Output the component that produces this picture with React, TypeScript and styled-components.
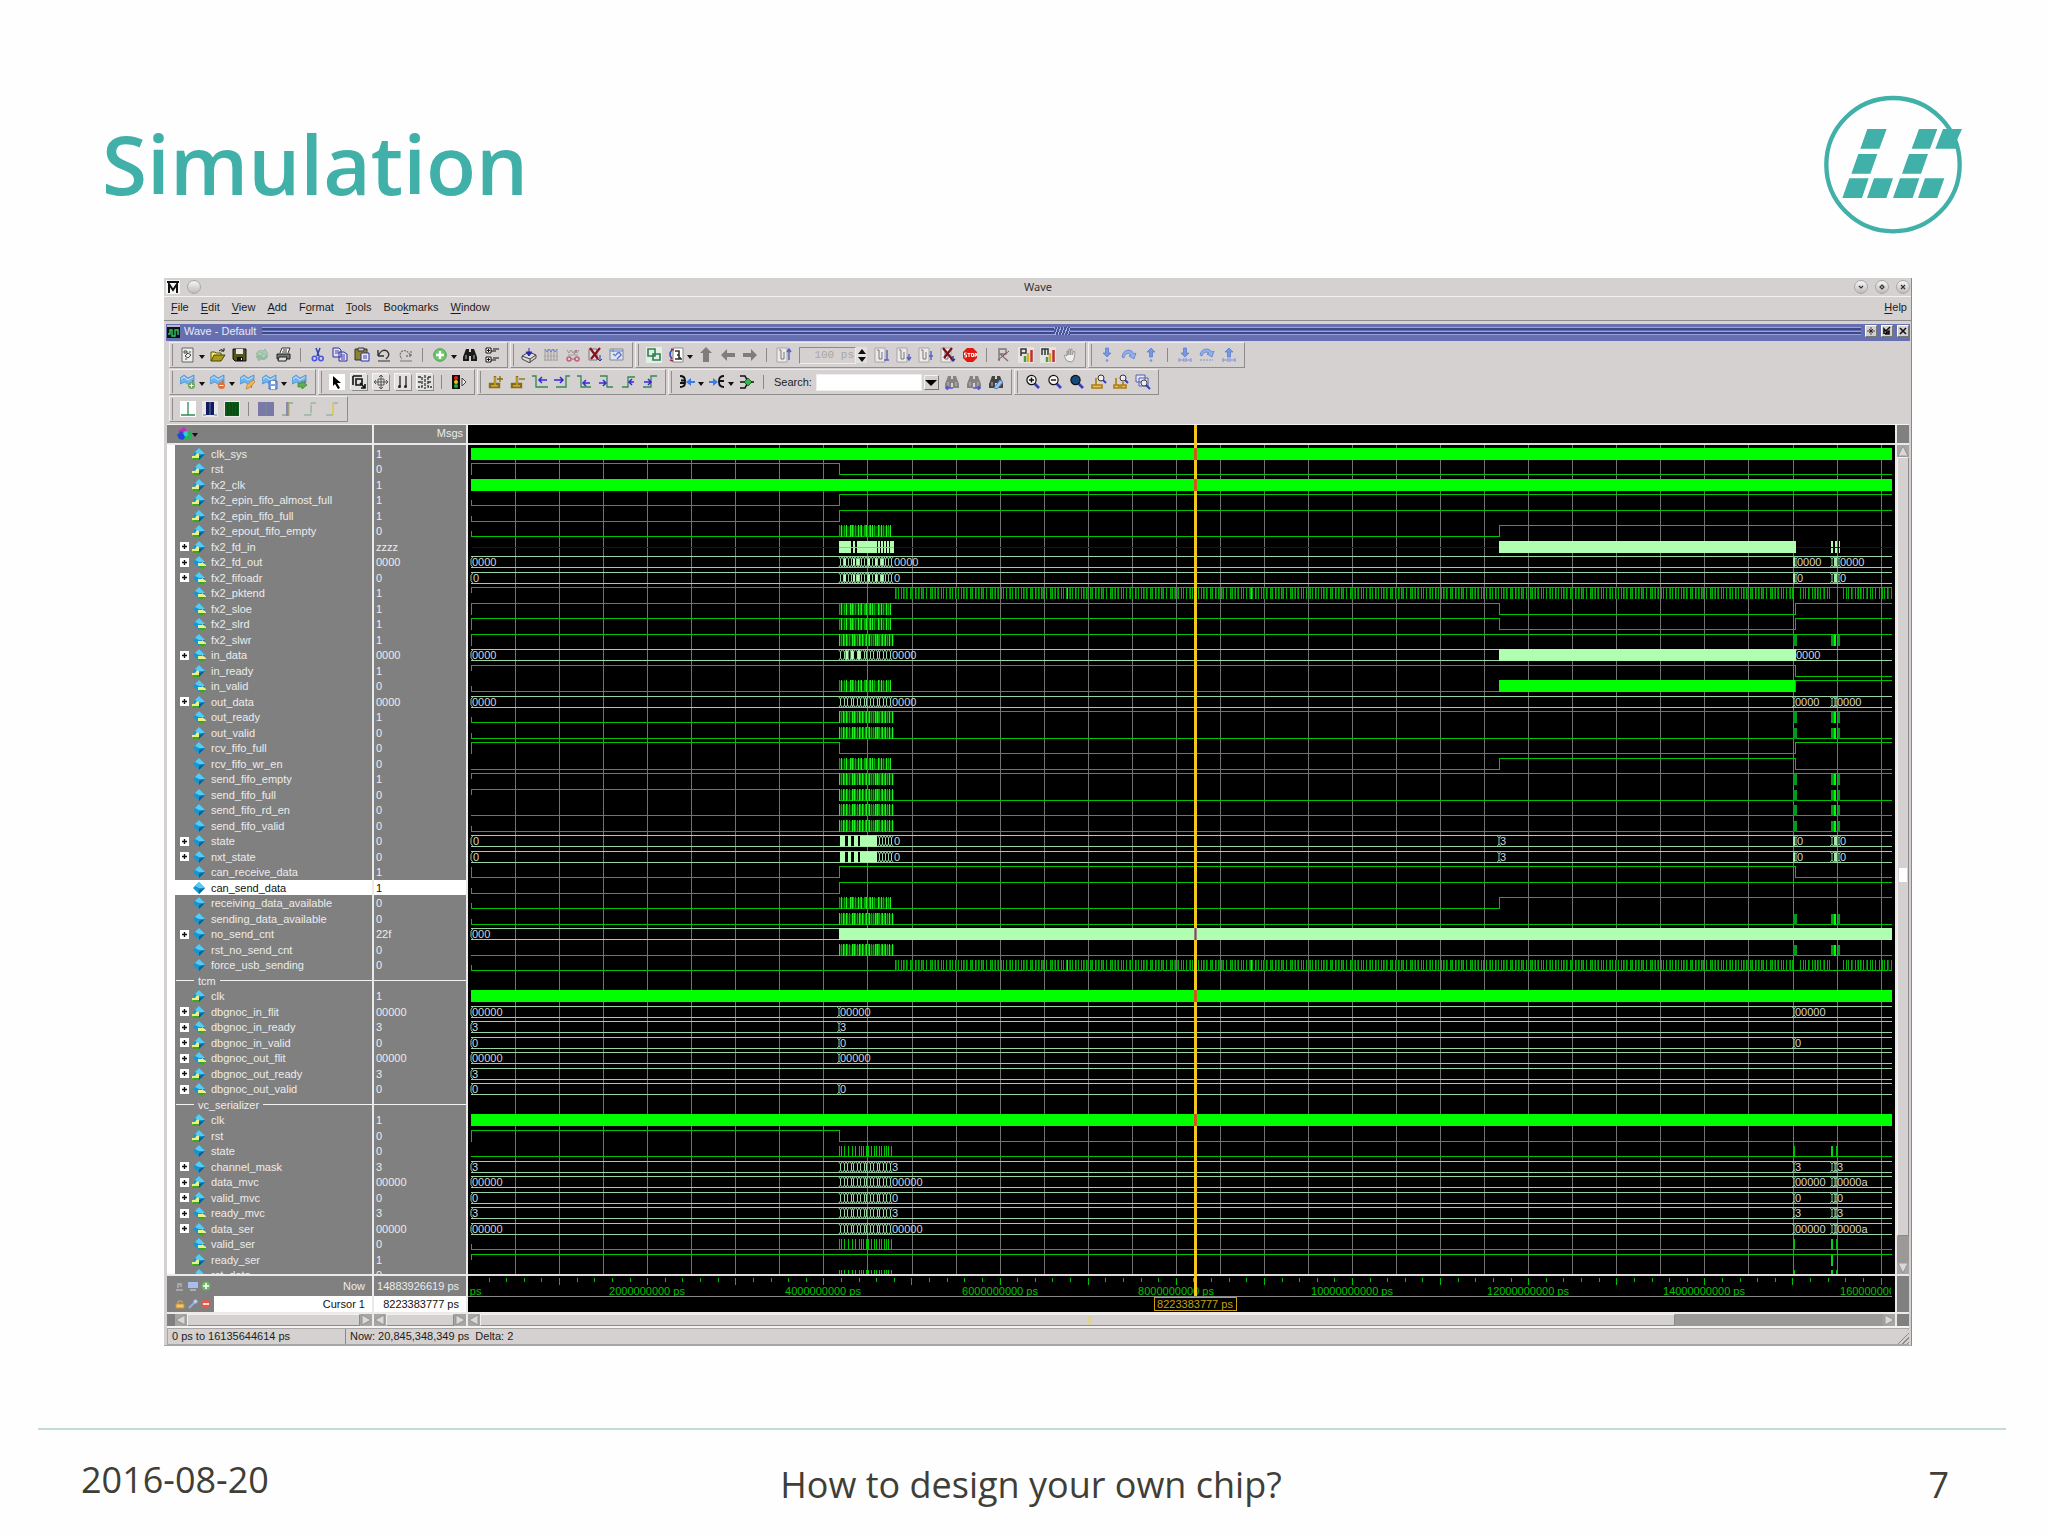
import React from "react";
import styled, { createGlobalStyle, css } from "styled-components";

const Global = createGlobalStyle`
  * { box-sizing: border-box; }
  body { margin: 0; background: #fefefe; }
  button, input { font: inherit; color: inherit; }
`;

const TEAL = "#40b0a9";
const CHROME = "#d5d1d0";

/* ---------- slide ---------- */

const Slide = styled.div`
  min-height: 100vh;
  display: flex;
  flex-direction: column;
  font-family: "Open Sans", "Noto Sans", sans-serif;
`;

const SlideHeader = styled.header`
  display: flex;
  justify-content: space-between;
  align-items: flex-start;
  padding: 95px 85px 43px 102px;
`;

const SlideTitle = styled.h1`
  margin: 0;
  padding-top: 8px;
  font-size: 82px;
  line-height: 120px;
  height: 120px;
  font-weight: 600;
  color: ${TEAL};
`;

const SlideFooter = styled.footer`
  margin: 82px 42px 0 38px;
  padding: 25px 25px 0 43px;
  border-top: 2px solid #c3dcd6;
  display: grid;
  grid-template-columns: 1fr auto 1fr;
  font-size: 36px;
  line-height: 50px;
  color: #3f3e37;
`;

const FooterMiddle = styled.span`
  padding-top: 5px;
`;

const PageNumber = styled.span`
  padding: 5px 32px 0 0;
  text-align: right;
`;

/* ---------- application window ---------- */

const Window = styled.main`
  margin: 0 136px 0 164px;
  background: ${CHROME};
  font-family: "Liberation Sans", Arial, sans-serif;
  font-size: 11px;
  color: #1c1c1c;
  border-right: 1px solid #8b8989;
  border-bottom: 1px solid #a9a7a6;
`;

const TitleBar = styled.div`
  display: grid;
  grid-template-columns: 1fr auto 1fr;
  align-items: center;
  height: 19px;
  padding: 0 1px 0 2px;
  border-bottom: 1px solid #f4f3f2;
  color: #333;
`;

const TitleSide = styled.div<{ $end?: boolean }>`
  display: flex;
  align-items: center;
  gap: 7px;
  justify-content: ${(p) => (p.$end ? "flex-end" : "flex-start")};
`;

const TitleText = styled.span`
  font-family: "Noto Sans", sans-serif;
  font-size: 11px;
  line-height: 16px;
`;

const RoundButton = styled.button`
  width: 14px;
  height: 14px;
  padding: 0;
  border: 1px solid #aaa7a6;
  border-radius: 50%;
  background: linear-gradient(#f6f6f6, #bdbbba);
  display: flex;
  align-items: center;
  justify-content: center;
`;

const MenuBar = styled.nav`
  display: flex;
  align-items: center;
  gap: 12px;
  height: 24px;
  padding: 0 4px 3px 7px;
  border-bottom: 1px solid #8c8a8a;
`;

const MenuItem = styled.button<{ $last?: boolean }>`
  border: 0;
  padding: 0;
  background: none;
  line-height: 14px;
  ${(p) => p.$last && css`margin-left: auto;`}
  u { text-underline-offset: 2px; }
`;

const PaneTitle = styled.div`
  display: flex;
  align-items: center;
  gap: 4px;
  height: 17px;
  margin: 3px 1px 0 2px;
  padding: 0 1px 3px;
  background: #6670b1;
  color: #e6e8f8;
  line-height: 14px;
`;

const PaneStripes = styled.span`
  flex: 1;
  height: 8px;
  margin: 0 0 0 2px;
  display: flex;
  justify-content: center;
  background: linear-gradient(#98a3de 0 1px, #3d4888 1px 3px, #6670b3 3px 4px, #98a3de 4px 5px, #3d4888 5px 7px, #98a3de 7px);
`;

const PaneGrip = styled.span`
  width: 16px;
  background: repeating-linear-gradient(110deg, #aab4ea 0 1px, #4a5598 1px 3px);
`;

const PaneButton = styled.button`
  width: 12px;
  height: 12px;
  padding: 0;
  border: 1px solid;
  border-color: #fff #777 #777 #fff;
  background: ${CHROME};
  display: flex;
`;

const Toolbars = styled.div`
  display: flex;
  flex-direction: column;
  gap: 1px;
  padding: 1px 0 2px 5px;
`;

const ToolRow = styled.div`
  display: flex;
  gap: 2px;
`;

const ToolGroup = styled.div`
  display: flex;
  align-items: center;
  height: 26px;
  padding: 0 4px 0 5px;
  border: 1px solid;
  border-color: #efedec #8f8d8c #8f8d8c #f4f2f1;
  &::before {
    content: "";
    width: 3px;
    height: 22px;
    border-left: 1px solid #8f8d8c;
    margin-left: -3px;
    margin-right: 1px;
  }
`;

const ToolButton = styled.button<{ $raised?: boolean }>`
  width: 22px;
  height: 20px;
  padding: 0;
  border: 0;
  background: none;
  display: flex;
  align-items: center;
  justify-content: center;
  svg {
    ${(p) => p.$raised && css`background: #e3e1e0; box-shadow: 1px 1px 0 #8d8b8b, -1px -1px 0 #f7f6f6;`}
  }
`;

const DropArrow = styled.button`
  width: 8px;
  height: 16px;
  border: 0;
  padding: 4px 0 0;
  background: none;
  display: flex;
  align-items: center;
  &::before {
    content: "";
    border: 3px solid transparent;
    border-top: 4px solid #111;
    border-bottom: 0;
  }
`;

const Separator = styled.span`
  width: 2px;
  height: 14px;
  margin: 0 5px;
  border-left: 1px solid #8b8989;
`;

const RunLength = styled.input`
  width: 57px;
  height: 17px;
  margin-left: 4px;
  padding: 0 1px;
  border: 1px solid;
  border-color: #8b8989 #eee #eee #8b8989;
  background: ${CHROME};
  color: #aaa6a5;
  text-align: right;
  font-family: "Liberation Mono", monospace;
`;

const Stepper = styled.span`
  display: flex;
  flex-direction: column;
  width: 11px;
  margin: 0 4px 0 0;
`;

const StepButton = styled.button<{ $down?: boolean }>`
  height: 8px;
  padding: 0;
  border: 0;
  background: #e3e1e0;
  display: flex;
  justify-content: center;
  align-items: center;
  &::before {
    content: "";
    border: 4px solid transparent;
    border-top-width: ${(p) => (p.$down ? 5 : 0)}px;
    border-bottom-width: ${(p) => (p.$down ? 0 : 5)}px;
    border-top-color: #111;
    border-bottom-color: #111;
  }
`;

const SearchLabel = styled.label`
  display: flex;
  align-items: center;
  gap: 4px;
  padding-left: 4px;
`;

const SearchBox = styled.input`
  width: 106px;
  height: 17px;
  border: 1px solid #eee;
  padding: 0 2px;
  background: #fff;
`;

const SearchDrop = styled.button`
  width: 15px;
  height: 15px;
  margin: 0 2px;
  padding: 4px 0 0;
  border: 1px solid;
  border-color: #f3f3f3 #777 #777 #f3f3f3;
  background: ${CHROME};
  display: flex;
  align-items: center;
  justify-content: center;
  &::before {
    content: "";
    border: 6px solid transparent;
    border-top: 6px solid #000;
    border-bottom: 3px solid transparent;
  }
`;

/* ---------- panes ---------- */

const Panes = styled.div`
  display: grid;
  grid-template-columns: 205px 92px minmax(0, 1fr) 12px;
  grid-template-rows: 18px 829px 36px 12px;
  gap: 2px;
  margin: 0 2px 0 3px;
  border-top: 1px solid #f4f3f2;
  border-bottom: 2px solid #f4f3f2;
  background: #ebe9e9;
`;

const Grey = styled.div`
  background: #808080;
  color: #ececec;
`;

const HeadCell = styled(Grey)<{ $end?: boolean }>`
  display: flex;
  align-items: center;
  justify-content: ${(p) => (p.$end ? "flex-end" : "flex-start")};
  padding: 0 3px 2px 9px;
`;

const SignalList = styled.ul<{ $names?: boolean }>`
  margin: 0;
  padding: 1px 0 0;
  list-style: none;
  display: grid;
  grid-auto-rows: 15px 16px;
  align-content: start;
  overflow: hidden;
  background: #808080;
  color: #ececec;
  ${(p) => p.$names && css`border-left: 8px solid #fff;`}
`;

const SignalRow = styled.li<{ $selected?: boolean }>`
  display: flex;
  align-items: center;
  padding-left: 5px;
  white-space: nowrap;
  ${(p) => p.$selected && css`background: #fff; color: #111;`}
`;

const ValueRow = styled(SignalRow)`
  padding-left: 2px;
`;

const Expander = styled.button<{ $shown: boolean }>`
  width: 9px;
  height: 9px;
  margin-right: 3px;
  padding: 0;
  border: 0;
  display: flex;
  background: #fff;
  visibility: ${(p) => (p.$shown ? "visible" : "hidden")};
`;

const SignalName = styled.span`
  margin-left: 5px;
`;

const GroupRow = styled.li`
  display: flex;
  align-items: center;
  gap: 4px;
  padding-left: 1px;
  &::before, &::after {
    content: "";
    height: 1px;
    background: #f2f2f2;
  }
  &::before { width: 18px; }
  &::after { flex: 1; }
`;

const RuleRow = styled.li`
  display: flex;
  align-items: center;
  &::before {
    content: "";
    flex: 1;
    height: 1px;
    background: #f2f2f2;
  }
`;

const CursorCell = styled(Grey)`
  display: grid;
  grid-template-rows: 20px 16px;
`;

const CursorRow = styled.div`
  display: flex;
  align-items: center;
  gap: 3px;
  padding-left: 8px;
`;

const CursorText = styled.span<{ $active?: boolean }>`
  flex: 1;
  align-self: stretch;
  display: flex;
  align-items: center;
  justify-content: flex-end;
  padding-right: 7px;
  white-space: nowrap;
  ${(p) => p.$active && css`background: #fff; color: #111;`}
`;

const IconButton = styled.button`
  width: 10px;
  height: 12px;
  padding: 0;
  border: 0;
  background: none;
  display: flex;
  align-items: center;
`;

const WaveSvg = styled.svg`
  grid-column: 3;
  grid-row: 1 / 4;
  width: 100%;
  height: 887px;
  background: #000;
  display: block;
  font-family: "Liberation Sans", Arial, sans-serif;
  font-size: 11px;
`;

const ScrollTrack = styled.div<{ $vertical?: boolean; $indent?: boolean }>`
  display: flex;
  flex-direction: ${(p) => (p.$vertical ? "column" : "row")};
  background: #9b9998;
  ${(p) => p.$indent && css`border-left: 8px solid #808080;`}
`;

const ScrollThumb = styled.div<{ $grow: number }>`
  flex: ${(p) => p.$grow} 1 0;
  display: flex;
  align-items: center;
  justify-content: center;
  background: ${CHROME};
  border: 1px solid;
  border-color: #f1f0f0 #8b8989 #8b8989 #f1f0f0;
`;

const ThumbMark = styled.span<{ $wide?: boolean }>`
  width: ${(p) => (p.$wide ? 8 : 4)}px;
  height: ${(p) => (p.$wide ? 14 : 9)}px;
  margin: ${(p) => (p.$wide ? "56px 0 0" : "0 0 0 24px")};
  background: ${(p) => (p.$wide ? "#fff" : "#ddd49a")};
`;

const ScrollRest = styled.div<{ $grow: number }>`
  flex: ${(p) => p.$grow} 1 0;
`;

const ScrollButton = styled.button`
  width: 12px;
  height: 12px;
  padding: 0;
  border: 0;
  background: #a8a6a5;
  display: flex;
`;

const StatusBar = styled.div`
  display: flex;
  align-items: stretch;
  height: 17px;
  margin: 0 2px 0 3px;
  line-height: 14px;
  border: 1px solid #a9a7a6;
  border-right: 0;
`;

const StatusCell = styled.span<{ $first?: boolean }>`
  width: ${(p) => (p.$first ? "178px" : "auto")};
  padding-left: 4px;
  border-right: ${(p) => (p.$first ? "1px solid #8b8989" : "0")};
  white-space: pre;
`;

const Resize = styled.span`
  margin-left: auto;
  width: 12px;
  background: repeating-linear-gradient(135deg, transparent 0 2px, #8b8989 2px 3px);
  clip-path: polygon(100% 0, 100% 100%, 0 100%);
`;

/* ---------- icons ---------- */

const Flag = ({ children }: { children?: React.ReactNode }) => (
  <>
    <path d="M0 4 4 1l4 3 6-3v8l-5 2-4-3-5 2Z" fill="#74b4ec" stroke="#3e86c8" strokeWidth=".7" />
    <path d="M1 5l3-2 4 3 5-3" stroke="#cbe6fb" fill="none" />
    <path d="M13 6l-2 8" stroke="#777" />
    {children}
  </>
);
const Glass = ({ fill = "#f4f4f4", children }: { fill?: string; children?: React.ReactNode }) => (
  <>
    <path d="M9 9l5 5" stroke="#3540b8" strokeWidth="2.6" />
    <circle cx="6.5" cy="6" r="4.6" fill={fill} stroke="#111" strokeWidth="1.2" />
    {children}
  </>
);
const Edge = ({ d, a }: { d: string; a: string }) => (
  <>
    <path d={d} stroke="#2f8a50" strokeWidth="1.3" fill="none" />
    <path d={a} stroke="#3a28d8" strokeWidth="1.5" fill="none" />
  </>
);
const RunIcon = ({ a, c = "#5a5fc0" }: { a: string; c?: string }) => (
  <>
    <path d="M1 1h10v14H1z" fill="#eceaea" stroke="#999" strokeWidth=".8" />
    <path d="M3 3h2v9M5 12h3V5" stroke="#777" fill="none" />
    <path d={a} stroke={c} strokeWidth="1.4" fill="none" />
  </>
);
const Binoculars = ({ c = "#1a1a1a", children }: { c?: string; children?: React.ReactNode }) => (
  <>
    <path d="M4 2h3v3h2V2h3l3 8v4H9V9H7v5H1v-4z" fill={c} />
    <path d="M4 8v4M12 8v4" stroke="#bbb" />
    {children}
  </>
);
const Pin = ({ d }: { d: string }) => (
  <>
    <path d="M7 2v8M2 10h9v3H2z" stroke="#8a6c10" strokeWidth="2.4" fill="#c9a820" />
    <path d="M7 3v8M3 12h7" stroke="#e0c440" />
    <path d={d} stroke="#8a6c00" strokeWidth="1.3" />
  </>
);
const StepArrow = ({ up, box }: { up?: boolean; box?: boolean }) => (
  <>
    <path d={up ? "M8 1l4 4H9.500v5h-3V5H4z" : "M8 10l4-4H9.500V1h-3v5H4z"} fill="#7698e4" stroke="#5478d0" strokeWidth=".7" />
    {box ? <path d="M2 11v4M2 13h3M6 12h4v2H6zM11 13h3M14 11v4" stroke="#7f8fe0" fill="none" /> : <circle cx="8" cy="13.500" r="1.3" fill="#7698e4" />}
  </>
);

const ICONS: Record<string, React.ReactNode> = {
  newdoc: <><path d="M2 1h11v14H2z" fill="#eee" stroke="#666" /><path d="M4 4h3v2H4zM8 6l3 2-3 3-3-2zM5 12h2M10 4v2" stroke="#444" fill="none" /></>,
  open: <><path d="M1 14V5h4l1 1h5v2" fill="#f6ec70" stroke="#5a5200" /><path d="M1 14l3-6h11l-4 6z" fill="#a89c18" stroke="#4a4400" /><path d="M9 4q2-3 5 0M14 1v3h-3" stroke="#222" fill="none" /></>,
  save: <><path d="M1 2h13v12H3l-2-2z" fill="#55551a" stroke="#111" /><path d="M4 2h7v5H4z" fill="#e6e6e0" /><path d="M5 10h6v4H5z" fill="#111" /><path d="M9 11h1v2H9z" fill="#eee" /></>,
  reload: <><path d="M2 7q2-5 8-3l1-2 3 5-6 1 1-2q-4-1-5 2z" fill="#a5cfb0" stroke="#86b094" strokeWidth=".6" /><path d="M14 9q-2 5-8 3l-1 2-3-5 6-1-1 2q4 1 5-2z" fill="#93bda2" stroke="#86b094" strokeWidth=".6" /></>,
  print: <><path d="M4 6l2-5h8l-2 5" fill="#fff" stroke="#333" /><path d="M7 3h4M6 5h5" stroke="#333" /><path d="M1 7h13v5H1z" fill="#777" stroke="#222" /><path d="M3 10h8l-1 4H2z" fill="#ddd" stroke="#222" /></>,
  cut: <><path d="M6 1l3 8M10 1L7 9" stroke="#333fae" strokeWidth="1.5" /><circle cx="4.500" cy="11.500" r="2.2" stroke="#4a58e0" strokeWidth="1.6" fill="none" /><circle cx="11" cy="11.500" r="2.2" stroke="#4a58e0" strokeWidth="1.600" fill="none" /></>,
  copy: <><path d="M1 1h6l2 2v7H1zM7 5h5l3 2v7H7z" fill="#dedef6" stroke="#31319a" /><path d="M3 4h4M3 6h4M9 8h4M9 10h4M9 12h4" stroke="#4444a8" /></>,
  paste: <><path d="M1 2h12v11H1z" fill="#8c842c" stroke="#333" /><path d="M4 1h6v3H4z" fill="#ccc" stroke="#333" /><path d="M7 6h8v8H7z" fill="#e5e5fb" stroke="#31319a" /><path d="M9 9h4M9 11h4" stroke="#4444a8" /></>,
  undo: <><path d="M2 9V3M2 9h6M2 9q4-8 9-5 4 4-1 8" stroke="#333" strokeWidth="1.400" fill="none" /><path d="M2 14h12" stroke="#333" /></>,
  redo: <><path d="M13 9V4M13 9H8M12 8Q8 1 3 5q-2 4 1 7" stroke="#777" strokeWidth="1.300" fill="none" strokeDasharray="2 1" /><path d="M2 14h12" stroke="#777" /></>,
  add: <><circle cx="8" cy="8" r="6.300" fill="#6cc46c" stroke="#4fa050" /><path d="M8 4v8M4 8h8" stroke="#fff" strokeWidth="2.400" /></>,
  find: <Binoculars />,
  tree: <><path d="M2 1h5v5H2zM2 10h5v5H2z" fill="#fff" stroke="#111" /><path d="M3 3.500h3M4.500 2v3M3 12.500h3M4.500 11v3M9 2h6M7 4h5M9 11h6M7 13h5" stroke="#111" /></>,
  compile: <><path d="M1 9l7-4 7 3-6 4zM1 9v3l8 4v-4M9 15l6-4V8" fill="#ddd" stroke="#444" /><path d="M8 1v7M5 5l3 4 3-4z" stroke="#2b2ea8" fill="#2b2ea8" /></>,
  compileall: <><path d="M2 2v12M5 2v12M8 2v12M11 2v12M14 2v12" stroke="#999" /><path d="M2 2l2 3 2-3 2 3 2-3 2 3 2-3" stroke="#7a7ad0" fill="none" /><path d="M1 9h14M1 13h14" stroke="#aaa" /></>,
  simulate: <><path d="M2 3l2 3 2-3 2 3 2-3 2 3 2-3M3 8h10" stroke="#999" fill="none" /><circle cx="4" cy="12" r="2" stroke="#c0607a" fill="none" strokeWidth="1.500" /><circle cx="12" cy="12" r="2" stroke="#c0607a" fill="none" strokeWidth="1.500" /><path d="M9 7l3-4M7 12h3" stroke="#a05070" /></>,
  breaksim: <><path d="M2 2h8v11H2z" fill="#ddd" stroke="#777" /><path d="M3 1l8 11M13 1L4 12" stroke="#8a1020" strokeWidth="2.200" /><path d="M13 8v5M11 12l2 2 2-2" stroke="#2b2ea8" fill="none" /></>,
  restart: <><path d="M1 2h13v11H1z" fill="#dfe6ee" stroke="#889" /><path d="M1 4h13M4 2v3" stroke="#6a7ac0" /><path d="M7 8q3-5 5 0l-4 4M4 7l3 2" stroke="#5a74d8" strokeWidth="1.400" fill="none" /></>,
  link: <><path d="M0 0h16v16H0z" fill="#e3eee5" /><path d="M2 2h7v7H2zM7 7h7v6H7z" fill="none" stroke="#2f8050" strokeWidth="1.600" /></>,
  envelope: <><path d="M5 1h10v14H5z" fill="#fff" stroke="#888" /><path d="M7 4h4v7h2M9 8h2M7 12h7" stroke="#333" fill="none" strokeWidth="1.600" /><path d="M4 3Q0 7 4 12" stroke="#3c46c8" strokeWidth="1.600" fill="none" /><path d="M3 2l3 1M2 13l3 1" stroke="#c02020" strokeWidth="1.500" /></>,
  up: <path d="M8 0l6 6h-3v9H5V6H2z" fill="#7f7d7c" />,
  left: <path d="M1 8l6-6v4h8v4H7v4z" fill="#7f7d7c" />,
  right: <path d="M15 8L9 2v4H1v4h8v4z" fill="#7f7d7c" />,
  runup: <RunIcon a="M13 13V3M11 5l2-3 2 3" />,
  run: <RunIcon a="M13 3v10M10 13h5" />,
  runcont: <RunIcon a="M13 7v5M11 10l2 3 2-3" />,
  runall: <RunIcon a="M13 4v9M11 9h4" />,
  killrun: <><RunIcon a="M13 9v5M11 12l2 2 2-2" c="#2b2ea8" /><path d="M3 1l9 11M12 1L4 11" stroke="#7a1018" strokeWidth="2.200" /></>,
  stop: <><path d="M5 1h6l4 4v6l-4 4H5l-4-4V5z" fill="#e01a10" /><path d="M4.500 6H2.500v2h2v2h-2M5.500 6.500h3M7 6v4M9.500 6.500h2v3h-2zM13 10V6.500h1.500v2H13" stroke="#fff" fill="none" /></>,
  perf: <><path d="M3 14V2h7v5H4l8 7" stroke="#777" fill="none" strokeWidth="1.400" /><path d="M2 13L13 4" stroke="#a04050" /></>,
  profile: <><path d="M0 0h16v16H0z" fill="#e6e4e0" /><path d="M3 9V2h5v4H3" stroke="#333" fill="none" strokeWidth="1.500" /><path d="M7 15V9" stroke="#4a9a4a" strokeWidth="2.500" /><path d="M10 15V6" stroke="#d8b020" strokeWidth="2.500" /><path d="M13.500 15V3" stroke="#c03030" strokeWidth="2.500" /></>,
  memory: <><path d="M0 0h16v16H0z" fill="#e6e4e0" /><path d="M2 8V2h3v6M5 2h3v6" stroke="#333" fill="none" strokeWidth="1.500" /><path d="M7 15v-5" stroke="#4a9a4a" strokeWidth="2.500" /><path d="M10 15V6" stroke="#d8b020" strokeWidth="2.500" /><path d="M13.500 15V3" stroke="#c03030" strokeWidth="2.500" /></>,
  hand: <path d="M5 14L2 9l1-1 2 1V4h1v4l1-6h1v6l1-6h1v6l2-4 1 1-1 7-2 3z" fill="#eee" stroke="#888" strokeWidth=".8" />,
  stepin: <StepArrow />,
  stepover: <path d="M1 10q1-7 7-7 3 0 5 4l2-1-2 6-5-3 2-1q-3-3-5-1-2 2-2 4z" fill="#8fb0ea" stroke="#5478d0" strokeWidth=".700" />,
  stepout: <StepArrow up />,
  stepinbox: <StepArrow box />,
  stepoverbox: <><path d="M1 8q1-6 7-6 3 0 5 3l2-1-2 6-5-3 2-1q-3-2-5 0-2 1-2 3z" fill="#8fb0ea" stroke="#5478d0" strokeWidth=".700" /><path d="M1 13h13" stroke="#7f8fe0" strokeDasharray="2 1" /></>,
  stepoutbox: <StepArrow up box />,
  flagadd: <Flag><circle cx="11.500" cy="11.500" r="3.500" fill="#6fa860" /><path d="M11.500 9.500v4M9.500 11.500h4" stroke="#fff" /></Flag>,
  flagdel: <Flag><circle cx="11.500" cy="11.500" r="3.500" fill="#e0703a" /><path d="M9.500 11.500h4" stroke="#fff" /></Flag>,
  flagedit: <Flag><path d="M6 15l1-4 6-5 2 2-6 6z" fill="#f0b850" stroke="#c08030" strokeWidth=".700" /></Flag>,
  flagsave: <Flag><path d="M7 7h8v8H7z" fill="#7ca4e8" stroke="#4a70c0" /><path d="M9 7h4v3H9zM9 12h4v3H9z" fill="#fff" /></Flag>,
  flaggo: <Flag><path d="M6 9h4V7l5 4-5 4v-2H6z" fill="#5fae50" stroke="#3a7c30" strokeWidth=".700" /></Flag>,
  pointer: <><path d="M0 0h16v16H0z" fill="#fff" /><path d="M4 2v10l2-2 3 5 2-1-3-5h4z" fill="#000" /></>,
  zoombox: <path d="M2 2v9M2 2h9M5 5h6v6H5zM9 9l5 5M14 10v4h-4" stroke="#111" strokeWidth="1.600" fill="none" />,
  pan: <path d="M8 1v14M1 8h14M6 3l2-2 2 2M6 13l2 2 2-2M3 6L1 8l2 2M13 6l2 2-2 2M5 5h6v6H5z" stroke="#555" fill="none" />,
  twocursor: <><path d="M5 2v10M11 2v10" stroke="#222" strokeWidth="1.300" /><circle cx="4.500" cy="12.500" r="1.500" fill="#222" /><circle cx="10.500" cy="12.500" r="1.500" fill="#222" /></>,
  editwave: <path d="M1 3h4v10H1M11 3v10h4M11 3h4M8 1v14M1 8h4M11 8h4" stroke="#333" strokeWidth="1.300" strokeDasharray="3 1" fill="none" />,
  traffic: <><path d="M1 1h8v14H1z" fill="#111" /><circle cx="5" cy="4" r="2" fill="#e02020" /><circle cx="5" cy="8" r="2" fill="#e8c020" /><circle cx="5" cy="12" r="2" fill="#20b030" /><path d="M11 4v8l4-4z" fill="#eee" stroke="#444" /></>,
  pinadd: <Pin d="M9 5h6M12 2v6" />,
  pindel: <Pin d="M9 5h6" />,
  prevtrans: <Edge d="M0 2h4v11h12" a="M15 6H7M10 3L7 6l3 3" />,
  nexttrans: <Edge d="M2 13h10V2h4" a="M0 6h9M6 3l3 3-3 3" />,
  prevfall: <Edge d="M1 2h4v11h10" a="M14 9H7M10 6L7 9l3 3" />,
  nextfall: <Edge d="M2 2h7v11h6" a="M1 9h7M5 6l3 3-3 3" />,
  prevrise: <Edge d="M2 13h6V3h7" a="M14 8H9M12 5L9 8l3 3" />,
  nextrise: <Edge d="M1 13h8V2h6" a="M2 8h6M6 5l3 3-3 3" />,
  busin: <><path d="M1 2q5 0 5 4.500H2M6 9q0 4-5 4M1 9h5M6 6v3" stroke="#111" strokeWidth="1.800" fill="none" /><path d="M7 8l5-4v3h4v2h-4v3z" fill="#3b7de8" /></>,
  busout: <><path d="M15 2q-5 0-5 5h5M10 8q0 5 5 5" stroke="#111" strokeWidth="1.800" fill="none" /><path d="M9 8L4 4v3H0v2h4v3z" fill="#3b7de8" /></>,
  busmid: <><path d="M1 2h5l3 6-3 6H1M1 8h14" stroke="#111" strokeWidth="1.600" fill="none" /><path d="M9 4l4 4-4 4-4-4z" fill="#30b848" stroke="#111" strokeWidth=".600" /></>,
  findprev: <Binoculars c="#858381"><path d="M9 14H2M4 12l-2 2 2 2" stroke="#5a50e0" fill="none" strokeWidth="1.500" /></Binoculars>,
  findnext: <Binoculars c="#858381"><path d="M7 14h7M12 12l2 2-2 2" stroke="#5a50e0" fill="none" strokeWidth="1.500" /></Binoculars>,
  findopt: <Binoculars c="#444"><path d="M6 14l6-8 3 2-6 7z" fill="#9cc4ee" stroke="#5a84c0" /></Binoculars>,
  zoomin: <Glass><path d="M4 6h5M6.500 3.500v5" stroke="#111" strokeWidth="1.400" /></Glass>,
  zoomout: <Glass><path d="M4 6h5" stroke="#111" strokeWidth="1.400" /></Glass>,
  zoomfull: <Glass fill="#164a7c" />,
  zoomcursor: <><path d="M5 4v7M1 11h10v3H1z" fill="#eac060" stroke="#b07a10" strokeWidth="1.600" /><circle cx="10" cy="4" r="3" fill="#eee" stroke="#333" /><path d="M12 6l3 3" stroke="#3540b8" strokeWidth="2" /></>,
  zoompair: <><path d="M3 4v7M10 8v3M1 11h5v3H1zM8 11h5v3H8z" fill="#eac060" stroke="#b07a10" strokeWidth="1.600" /><circle cx="10" cy="4" r="3" fill="#eee" stroke="#333" /><path d="M12 6l3 3" stroke="#3540b8" strokeWidth="2" /></>,
  zoomother: <><path d="M1 1h9v7H1zM4 4h9v8H4z" fill="#e4e4f4" stroke="#5560a8" /><circle cx="9" cy="9" r="3" fill="#eee" stroke="#444" /><path d="M11 11l4 4" stroke="#3540b8" strokeWidth="2" /></>,
  leaf1: <><path d="M0 0h16v16H0z" fill="#fff" /><path d="M8 1v13M1 14h14" stroke="#2f8a50" strokeWidth="1.300" /></>,
  leaf2: <><path d="M0 0h16v16H0z" fill="#e9e8e8" /><path d="M4 1h8v13H4z" fill="#151a60" /><path d="M1 14h3M12 14h3M8 1v13" stroke="#5080a0" /></>,
  leaf3: <><path d="M0 0h16v16H0z" fill="#e9e8e8" /><path d="M1 1h14v14H1z" fill="#0d5a18" /><path d="M4 2v12M7 2v12M10 2v12M13 2v12" stroke="#06400d" /></>,
  leaf4: <><path d="M0 1h16v14H0z" fill="#7a78a8" /><path d="M8 1v14" stroke="#6a9a80" /></>,
  leaf5: <><path d="M6 1h3v14H6z" fill="#8c8aac" /><path d="M2 14h4M9 2h4" stroke="#5a9a60" /><path d="M9 1v14" stroke="#b8b850" /></>,
  leaf6: <path d="M2 14h7V2h5" stroke="#7aa884" fill="none" strokeDasharray="8 1" />,
  leaf7: <><path d="M2 14h7M9 2h5" stroke="#7aa884" fill="none" /><path d="M9 2v12" stroke="#d4cc40" strokeWidth="1.500" /></>,
};

const Icon = ({ name, size = 16 }: { name: string; size?: number }) => (
  <svg width={size} height={size} viewBox="0 0 16 16" fill="none" aria-hidden="true">
    {ICONS[name]}
  </svg>
);

const RAISED = new Set(["zoombox", "pan", "twocursor", "editwave"]);

/* "|" is a separator and "v" a drop-down arrow; anything else names an icon. */
const Tools = ({ items }: { items: string }) => (
  <>
    {items.split(" ").map((it, i) =>
      it === "|" ? (
        <Separator key={i} />
      ) : it === "v" ? (
        <DropArrow key={i} aria-label="More" />
      ) : (
        <ToolButton key={i} aria-label={it} $raised={RAISED.has(it)}>
          <Icon name={it} />
        </ToolButton>
      )
    )}
  </>
);

const Diamond = ({ port }: { port: string }) => (
  <svg width="14" height="14" viewBox="0 0 14 14" aria-hidden="true">
    <path d="M7 1l6 6-6 6-6-6z" fill="#1496d2" />
    <path d="M7 1l6 6H7L3 5z" fill="#56cbf4" />
    <path d="M13 7l-6 6V9z" fill="#0b5c94" />
    {port === "i" && (
      <>
        <path d="M0 9h3L5 6l2 1v5H0z" fill="#e9f08a" />
        <path d="M0 11h7v2H1z" fill="#3aa818" />
      </>
    )}
    {port === "o" && (
      <>
        <path d="M6 8h4V7l4 3v1H6z" fill="#e9f08a" />
        <path d="M7 11h7l-4 3v-1H7z" fill="#3aa818" />
      </>
    )}
  </svg>
);

const Logo = () => (
  <svg width="140" height="140" viewBox="70 45 420 420" role="img" aria-label="LibreCores">
    <circle cx="280" cy="254" r="200" fill="none" stroke={TEAL} strokeWidth="13" />
    <g fill={TEAL}>
      <path d="M203 147h58l-22 59h-57zM358 147h55l-22 59h-55zM430 147h57l-15 33 3 26h-68z" />
      <path d="M176 222h57l-21 59h-57zM328 222h57l-21 59h-57z" />
      <path d="M149 295h58l-20 59h-59zM223 295h57l-20 59h-58zM301 295h58l-20 59h-59zM376 295h58l-21 59h-58z" />
    </g>
  </svg>
);

/* ---------- signals ---------- */

/* Horizontal positions are measured from the left edge of the wave area. */
const T0 = 3;
const END = 1424;
const NS2 = 176.2;
const A = 371;
const B = 1031;
const C = 1327;

type Kind = "clk" | "bit" | "bus" | "group" | "float";
interface Signal {
  n: string;
  v?: string;
  port?: "i" | "o" | "";
  plus?: boolean;
  kind: Kind;
  init?: "m" | "x" | "";
  lvl?: 0 | 1;
  at?: number[];
  burst?: "full" | "short" | "sparse";
  tail?: "dense" | "thin";
  comb?: boolean;
  fill?: [number, number];
  labels?: [number, string][];
  mesh?: "a" | "b" | "c";
}

const bit = (n: string, v: string, port: Signal["port"], init: Signal["init"], lvl: 0 | 1, rest: Partial<Signal> = {}): Signal => ({ n, v, port, kind: "bit", init, lvl, ...rest });
const bus = (n: string, v: string, port: Signal["port"], labels: [number, string][], rest: Partial<Signal> = {}): Signal => ({ n, v, port, plus: true, kind: "bus", labels, ...rest });
const clk = (n: string): Signal => ({ n, v: "1", port: "i", kind: "clk" });

const SIGNALS: Signal[] = [
  clk("clk_sys"),
  bit("rst", "0", "i", "x", 1, { at: [A] }),
  clk("fx2_clk"),
  bit("fx2_epin_fifo_almost_full", "1", "i", "m", 0, { at: [A] }),
  bit("fx2_epin_fifo_full", "1", "i", "m", 0, { at: [A] }),
  bit("fx2_epout_fifo_empty", "0", "i", "m", 0, { at: [B], burst: "short" }),
  { n: "fx2_fd_in", v: "zzzz", port: "i", plus: true, kind: "float" },
  bus("fx2_fd_out", "0000", "o", [[T0, "0000"], [425, "0000"], [1328, "0000"], [1371, "0000"]], { mesh: "a", tail: "dense" }),
  bus("fx2_fifoadr", "0", "o", [[T0 + 1, "0"], [425, "0"], [1328, "0"], [1371, "0"]], { mesh: "a", tail: "dense" }),
  bit("fx2_pktend", "1", "o", "m", 1, { comb: true }),
  bit("fx2_sloe", "1", "o", "x", 1, { at: [B, C], burst: "short" }),
  bit("fx2_slrd", "1", "o", "x", 1, { at: [B, C], burst: "short" }),
  bit("fx2_slwr", "1", "o", "x", 1, { burst: "full", tail: "dense" }),
  bus("in_data", "0000", "o", [[T0, "0000"], [423, "0000"], [1327, "0000"]], { mesh: "b", fill: [B, 1328] }),
  bit("in_ready", "1", "i", "m", 1, { at: [C] }),
  bit("in_valid", "0", "o", "m", 0, { burst: "short", fill: [B, C], at: [C] }),
  bus("out_data", "0000", "i", [[T0, "0000"], [423, "0000"], [1326, "0000"], [1368, "0000"]], { mesh: "b", tail: "thin" }),
  bit("out_ready", "1", "o", "m", 0, { at: [A], burst: "full", tail: "dense" }),
  bit("out_valid", "0", "i", "m", 0, { burst: "full", tail: "dense" }),
  bit("rcv_fifo_full", "0", "", "x", 1, { at: [A, C] }),
  bit("rcv_fifo_wr_en", "0", "", "", 0, { at: [B, C], burst: "short" }),
  bit("send_fifo_empty", "1", "", "m", 1, { burst: "full", tail: "dense" }),
  bit("send_fifo_full", "0", "", "m", 1, { at: [A], burst: "full", tail: "dense" }),
  bit("send_fifo_rd_en", "0", "", "", 0, { burst: "full", tail: "dense" }),
  bit("send_fifo_valid", "0", "", "m", 0, { burst: "full", tail: "dense" }),
  bus("state", "0", "", [[T0 + 1, "0"], [425, "0"], [B, "3"], [1328, "0"], [1371, "0"]], { mesh: "c", tail: "dense" }),
  bus("nxt_state", "0", "", [[T0 + 1, "0"], [425, "0"], [B, "3"], [1328, "0"], [1371, "0"]], { mesh: "c", tail: "dense" }),
  bit("can_receive_data", "1", "", "x", 0, { at: [A, C] }),
  bit("can_send_data", "1", "", "m", 0, { at: [A] }),
  bit("receiving_data_available", "0", "", "m", 0, { at: [B], burst: "short" }),
  bit("sending_data_available", "0", "", "m", 0, { burst: "full", tail: "dense" }),
  bus("no_send_cnt", "22f", "", [[T0, "000"]], { fill: [A, END] }),
  bit("rst_no_send_cnt", "0", "", "", 0, { burst: "full", tail: "dense" }),
  bit("force_usb_sending", "0", "", "m", 0, { comb: true }),
  { n: "tcm", kind: "group" },
  clk("clk"),
  bus("dbgnoc_in_flit", "00000", "i", [[T0, "00000"], [A, "00000"], [1326, "00000"]]),
  bus("dbgnoc_in_ready", "3", "o", [[T0, "3"], [A, "3"]]),
  bus("dbgnoc_in_valid", "0", "i", [[T0, "0"], [A, "0"], [1326, "0"]]),
  bus("dbgnoc_out_flit", "00000", "o", [[T0, "00000"], [A, "00000"]]),
  bus("dbgnoc_out_ready", "3", "i", [[T0, "3"]]),
  bus("dbgnoc_out_valid", "0", "o", [[T0, "0"], [A, "0"]]),
  { n: "vc_serializer", kind: "group" },
  clk("clk"),
  bit("rst", "0", "i", "x", 1, { at: [A] }),
  bit("state", "0", "", "", 0, { burst: "sparse", tail: "thin" }),
  bus("channel_mask", "3", "", [[T0, "3"], [423, "3"], [1326, "3"], [1368, "3"]], { mesh: "b", tail: "thin" }),
  bus("data_mvc", "00000", "i", [[T0, "00000"], [423, "00000"], [1326, "00000"], [1368, "0000a"]], { mesh: "b", tail: "thin" }),
  bus("valid_mvc", "0", "i", [[T0, "0"], [423, "0"], [1326, "0"], [1368, "0"]], { mesh: "b", tail: "thin" }),
  bus("ready_mvc", "3", "o", [[T0, "3"], [423, "3"], [1326, "3"], [1368, "3"]], { mesh: "b", tail: "thin" }),
  bus("data_ser", "00000", "o", [[T0, "00000"], [423, "00000"], [1326, "00000"], [1368, "0000a"]], { mesh: "b", tail: "thin" }),
  bit("valid_ser", "0", "o", "m", 0, { burst: "sparse", tail: "thin" }),
  bit("ready_ser", "1", "i", "m", 1),
  bit("rst_data", "0", "i", "", 0, { burst: "sparse", tail: "thin" }),
];

const SELECTED = "can_send_data";

const LINE = "#00c400";
const BRIGHT = "#00ff00";
const BUS = "#98d4a4";
const PALE = "#b0ffb0";

const rowTop = (i: number) => 21 + (i >> 1) * 31 + (i & 1 ? 15 : 0);

const bars = (xs: number[], hi: number, lo: number) => xs.map((x) => `M${x} ${hi}V${lo}`).join("");

const range = (from: number, to: number, steps: number[]) => {
  const out: number[] = [];
  let x = from;
  for (let i = 0; x <= to; i++) {
    out.push(x + 0.5);
    x += steps[i % steps.length];
  }
  return out;
};

const FULL_DIM = range(371, 425, [2, 3, 2, 1, 2, 3, 1, 2]);
const FULL_LIT = range(371, 425, [4, 3, 6, 2, 5, 3]);
const SHORT_DIM = range(371, 422, [2, 3, 2, 4, 1, 2]);
const SHORT_LIT = range(373, 422, [5, 4, 2, 6, 3]);
const SPARSE = [371, 373, 376, 380, 384, 387, 391, 393, 395, 398, 400, 403, 406, 408, 411, 413, 416, 418, 420, 423].map((x) => x + 0.5);
const COMB = [...range(427, 1324, [3, 3, 2, 3, 4, 2, 3]), ...range(1332, 1362, [3, 2, 3, 4]), ...range(1375, 1423, [3, 2, 3, 4])];
const COMB_DIM = [...range(428, 1324, [5, 3, 3, 4]), ...range(1332, 1362, [5, 4]), ...range(1375, 1423, [5, 4])];

const crossings = (xs: number[], hi: number, lo: number) => {
  const m = (hi + lo) / 2;
  return xs.map((x) => `M${x - 1} ${hi}L${x + 1} ${m - 3}V${m + 3}L${x - 1} ${lo}M${x + 3} ${hi}L${x + 1} ${m - 3}M${x + 1} ${m + 3}L${x + 3} ${lo}`).join("");
};

const BitTrace = ({ s, y }: { s: Signal; y: number }) => {
  const hi = y + 2.5;
  const lo = y + 13.5;
  const pick = (l: number) => (l ? hi : lo);
  let lvl: number = s.lvl ?? 0;
  let d = `M${T0} ${pick(lvl)}`;
  if (s.init === "m") d = `M${T0 + 0.5} ${y + 8}V${pick(lvl)}`;
  if (s.init === "x") d = `M${T0 + 0.5} ${pick(1 - lvl)}V${pick(lvl)}`;
  for (const x of s.at ?? []) {
    lvl = 1 - lvl;
    d += `H${x + 0.5}V${pick(lvl)}`;
  }
  d += `H${END}`;
  const dim = s.burst === "full" ? FULL_DIM : s.burst === "short" ? SHORT_DIM : [];
  const lit = s.burst === "full" ? FULL_LIT : s.burst === "short" ? SHORT_LIT : [];
  return (
    <g shapeRendering="crispEdges" fill="none">
      {dim.length > 0 && <path d={`M371 ${hi}H${s.burst === "full" ? 426 : 423}V${lo}H371z`} fill="#004c00" />}
      <path d={d} stroke={LINE} />
      <path d={bars(dim, hi - 1, lo)} stroke="#00ac00" />
      <path d={bars(lit, hi - 1, lo)} stroke="#20ec20" />
      {s.burst === "sparse" && <path d={bars(SPARSE, hi, lo)} stroke="#00c400" />}
      {s.comb && (
        <>
          <path d={bars(COMB_DIM, hi, lo)} stroke="#007400" />
          <path d={bars(COMB, hi, lo)} stroke="#00b000" />
          <path d={bars([599.5, 783.5], hi, lo)} stroke={BRIGHT} />
        </>
      )}
      {s.fill && <path d={`M${s.fill[0]} ${hi - 0.5}H${s.fill[1]}V${lo + 0.5}H${s.fill[0]}z`} fill={BRIGHT} />}
      {s.tail === "dense" && (
        <>
          <path d={`M1325 ${hi}h4v11h-4zM1363 ${hi}h3v11h-3zM1370 ${hi}h2v11h-2z`} fill="#009c20" />
          <path d={`M1367 ${hi}v11`} stroke={BRIGHT} strokeWidth="2" />
        </>
      )}
      {s.tail === "thin" && <path d={bars([1326.5, 1368.5], hi, lo)} stroke={LINE} />}
      {(s.tail === "thin" || s.n === "ready_ser") && <path d={`M1364 ${hi}V${lo}`} stroke="#00d020" strokeWidth="2" />}
    </g>
  );
};

const BusTrace = ({ s, y }: { s: Signal; y: number }) => {
  const hi = y + 2.5;
  const lo = y + 13.5;
  const meshXs = s.mesh === "a" ? range(371, 423, [3, 2, 3]) : s.mesh === "b" ? range(371, 421, [4, 3, 4, 2]) : range(410, 422, [3]);
  const edges = (s.labels ?? []).map(([x]) => x).filter((x) => x > 10 && x !== 425 && x !== 423);
  return (
    <g fill="none">
      <path d={`M${T0} ${hi}H${END}M${T0} ${lo}H${END}`} stroke={BUS} shapeRendering="crispEdges" />
      <path d={`M${T0 + 2} ${hi}L${T0} ${hi + 3}V${lo - 3}L${T0 + 2} ${lo}`} stroke={BUS} />
      {s.mesh && <path d={crossings(meshXs, hi, lo)} stroke="#9ad8a4" />}
      {s.mesh === "a" && <path d={bars([377, 386, 390, 401, 408, 414], hi + 2, lo - 2)} stroke={PALE} strokeWidth="2" />}
      {s.n === "in_data" && <path d={bars([379, 384, 391], hi + 1, lo - 1)} stroke={PALE} strokeWidth="3" />}
      {s.mesh === "c" && <path d={`M372 ${hi}h5v11h-5zM380 ${hi}h3v11h-3zM386 ${hi}h4v11h-4zM392 ${hi}h17v11h-17z`} fill={PALE} />}
      <path d={crossings(edges.map((x) => x - 1), hi, lo)} stroke="#8fca9c" />
      {s.tail && <path d={crossings([1363, 1366], hi, lo)} stroke="#8fca9c" />}
      {s.tail === "dense" && <path d={`M1366 ${hi + 1}h3v9h-3zM1325 ${hi + 1}h2v9h-2z`} fill="#9fe8a8" />}
      {s.fill && <path d={`M${s.fill[0]} ${hi - 0.5}H${s.fill[1]}V${lo + 0.5}H${s.fill[0]}z`} fill={PALE} />}
      {(s.labels ?? []).map(([x, t]) => (
        <text key={x} x={x + 1} y={y + 12} fill="#d6d6d6">{t}</text>
      ))}
    </g>
  );
};

const Trace = ({ s, y }: { s: Signal; y: number }) => {
  if (s.kind === "clk") return <rect x={T0} y={y + 2} width={END - T0} height="12" fill={BRIGHT} />;
  if (s.kind === "bit") return <BitTrace s={s} y={y} />;
  if (s.kind === "bus") return <BusTrace s={s} y={y} />;
  if (s.kind === "float")
    return (
      <g shapeRendering="crispEdges">
        <path d={`M371 ${y + 2}h12v12h-12zM385 ${y + 2}h2v12h-2zM389 ${y + 2}h20v12h-20zM${B} ${y + 2}h297v12h-297z`} fill={PALE} />
        <path d={bars([411, 414, 417, 420, 423, 425, 1364, 1368], y + 2, y + 14)} stroke={PALE} strokeWidth="2" />
        <path d={bars([1371.5], y + 2, y + 14)} stroke={PALE} />
        <path d={`M4 ${y + 8.5}H371M426 ${y + 8.5}H${B}M1328 ${y + 8.5}H${END}`} stroke="#0000c8" />
        <path d={`M371 ${y + 8.5}H426`} stroke="#7fc8c8" />
      </g>
    );
  return null;
};

const CURSOR_X = 727.5;

const Waves = () => {
  const gridXs = Array.from({ length: 32 }, (_, k) => Math.round(T0 + (k + 1) * (NS2 / 4)) + 0.5);
  const ticks = Array.from({ length: 80 }, (_, k) => k + 1);
  return (
    <WaveSvg role="img" aria-label="Signal waveforms">
      <defs>
        <clipPath id="rows"><rect x="0" y="20" width="1424" height="829" /></clipPath>
        <clipPath id="scale"><rect x={T0 - 1} y="851" width="1421" height="22" /></clipPath>
      </defs>
      <path d={gridXs.map((x) => `M${x} 20V849`).join("")} stroke="#727272" shapeRendering="crispEdges" />
      <g clipPath="url(#rows)">
        {SIGNALS.map((s, i) => (
          <Trace key={i} s={s} y={rowTop(i)} />
        ))}
      </g>
      <path d="M0 19H3000M0 850H3000" stroke="#dcdada" strokeWidth="2" />
      <path
        d={ticks.map((k) => `M${Math.round(T0 + k * (NS2 / 10)) + 0.5} 853v${k % 5 === 0 ? 7 : 4}`).join("")}
        stroke="#00c400"
        shapeRendering="crispEdges"
      />
      <g clipPath="url(#scale)" fill="#00c000" textAnchor="middle">
        {Array.from({ length: 9 }, (_, k) => (
          <text key={k} x={Math.round(T0 + k * NS2)} y="870">{k ? `${k * 2}000000000 ps` : "0 ps"}</text>
        ))}
      </g>
      <path d={`M0 871.5H${END}`} stroke="#8a8a8a" shapeRendering="crispEdges" />
      <path d={`M${CURSOR_X} 0V871`} stroke="#f2c81e" strokeWidth="3" shapeRendering="crispEdges" />
      {SIGNALS.map((s, i) =>
        s.kind === "clk" ? <rect key={i} x={CURSOR_X - 1.5} y={rowTop(i) + 2} width="3" height="12" fill="#d0581c" /> : null
      )}
      <rect x={CURSOR_X - 1} y={rowTop(31) + 2} width="2" height="12" fill="#4848e8" />
      <rect x="686.5" y="872.5" width="82" height="13" fill="#000" stroke="#c8a010" />
      <text x="727" y="883" fill="#c8a010" textAnchor="middle">8223383777 ps</text>
    </WaveSvg>
  );
};

const ARROWS: Record<string, string> = {
  left: "M10 1v10L1 6z",
  right: "M2 1v10l9-5z",
  up: "M6 1l5 10H1z",
  down: "M6 11L1 1h10z",
};
const Arrow = ({ dir }: { dir: string }) => (
  <ScrollButton aria-label={`Scroll ${dir}`}>
    <svg width="12" height="12"><path d={ARROWS[dir]} fill="#dad8d7" stroke="#8b8989" strokeWidth=".8" /></svg>
  </ScrollButton>
);

const MENUS: [string, string, string][] = [
  ["", "F", "ile"], ["", "E", "dit"], ["", "V", "iew"], ["", "A", "dd"], ["F", "o", "rmat"], ["", "T", "ools"], ["Boo", "k", "marks"], ["", "W", "indow"],
];

export default function App() {
  return (
    <Slide>
      <Global />
      <SlideHeader>
        <SlideTitle>Simulation</SlideTitle>
        <Logo />
      </SlideHeader>

      <Window>
        <TitleBar>
          <TitleSide>
            <svg width="14" height="14" aria-hidden="true">
              <path d="M0 0h14v14H0z" fill="#f6f6f6" />
              <path d="M1 2h12M3 13V4l4 6 4-6v9" stroke="#111" strokeWidth="2" fill="none" />
            </svg>
            <RoundButton aria-label="Window menu" />
          </TitleSide>
          <TitleText>Wave</TitleText>
          <TitleSide $end>
            {["M2 3l2 2 2-2", "M4 2l2 2-2 2-2-2z", "M2 2l4 4M6 2L2 6"].map((d) => (
              <RoundButton key={d} aria-label="Window control">
                <svg width="8" height="8"><path d={d} stroke="#333" strokeWidth="1.200" fill="none" /></svg>
              </RoundButton>
            ))}
          </TitleSide>
        </TitleBar>

        <MenuBar>
          {MENUS.map(([a, u, b]) => (
            <MenuItem key={a + u + b}>{a}<u>{u}</u>{b}</MenuItem>
          ))}
          <MenuItem $last><u>H</u>elp</MenuItem>
        </MenuBar>

        <PaneTitle>
          <svg width="13" height="13" aria-hidden="true">
            <path d="M0 0h13v13H0z" fill="#111" />
            <path d="M1 9h2V5h2v6h3V5h3v5" stroke="#2fc46a" strokeWidth="1.400" fill="none" />
            <path d="M0 0h13v2H0z" fill="#b9b9c8" />
          </svg>
          <span>Wave - Default</span>
          <PaneStripes><PaneGrip /></PaneStripes>
          {["M1 5h8M5 1v8M3 3l4 4M7 3L3 7", "M2 8V3l2 2 4-4M3 8h4V5L3 8", "M2 2l6 6M8 2L2 8"].map((d, i) => (
            <PaneButton key={d} aria-label="Pane control">
              <svg width="10" height="10"><path d={d} stroke="#111" strokeWidth={i ? 1.6 : 0.7} fill="none" /></svg>
            </PaneButton>
          ))}
        </PaneTitle>

        <Toolbars>
          <ToolRow>
            <ToolGroup><Tools items="newdoc v open save reload print | cut copy paste undo redo | add v find tree" /></ToolGroup>
            <ToolGroup><Tools items="compile compileall simulate breaksim restart" /></ToolGroup>
            <ToolGroup>
              <Tools items="link envelope v up left right | runup" />
              <RunLength aria-label="Run length" defaultValue="100 ps" disabled />
              <Stepper>
                <StepButton aria-label="Increase" />
                <StepButton $down aria-label="Decrease" />
              </Stepper>
              <Tools items="run runcont runall killrun stop | perf profile memory hand" />
            </ToolGroup>
            <ToolGroup><Tools items="stepin stepover stepout | stepinbox stepoverbox stepoutbox" /></ToolGroup>
          </ToolRow>
          <ToolRow>
            <ToolGroup><Tools items="flagadd v flagdel v flagedit flagsave v flaggo" /></ToolGroup>
            <ToolGroup><Tools items="pointer zoombox pan twocursor editwave | traffic" /></ToolGroup>
            <ToolGroup><Tools items="pinadd pindel prevtrans nexttrans prevfall nextfall prevrise nextrise" /></ToolGroup>
            <ToolGroup>
              <Tools items="busin v busout v busmid |" />
              <SearchLabel>Search:<SearchBox type="text" /></SearchLabel>
              <SearchDrop aria-label="Search history" />
              <Tools items="findprev findnext findopt" />
            </ToolGroup>
            <ToolGroup><Tools items="zoomin zoomout zoomfull zoomcursor zoompair zoomother" /></ToolGroup>
          </ToolRow>
          <ToolRow>
            <ToolGroup><Tools items="leaf1 leaf2 leaf3 | leaf4 leaf5 leaf6 leaf7" /></ToolGroup>
          </ToolRow>
        </Toolbars>

        <Panes>
          <HeadCell>
            <svg width="16" height="13" aria-hidden="true">
              <path d="M2 4l6-4 3 4-5 3z" fill="#c22cc0" />
              <path d="M8 4h7v8H8z" fill="#2bb35c" />
              <path d="M1 8l4-4 5 5-3 4-4-1z" fill="#1f48d8" />
              <path d="M7 6l4-2 1 4-3 2z" fill="#38c8e8" />
            </svg>
            <DropArrow aria-label="Signal display options" />
          </HeadCell>
          <HeadCell $end>Msgs</HeadCell>
          <Waves />
          <Grey />

          <SignalList $names>
            {SIGNALS.map((s, i) =>
              s.kind === "group" ? (
                <GroupRow key={i}>{s.n}</GroupRow>
              ) : (
                <SignalRow key={i} $selected={s.n === SELECTED}>
                  <Expander $shown={!!s.plus} aria-label={`Expand ${s.n}`}>
                    <svg width="9" height="9"><path d="M2 4.500h5M4.500 2v5" stroke="#111" strokeWidth="1.400" /></svg>
                  </Expander>
                  <Diamond port={s.port ?? ""} />
                  <SignalName>{s.n}</SignalName>
                </SignalRow>
              )
            )}
          </SignalList>
          <SignalList>
            {SIGNALS.map((s, i) =>
              s.kind === "group" ? <RuleRow key={i} /> : <ValueRow key={i} $selected={s.n === SELECTED}>{s.v}</ValueRow>
            )}
          </SignalList>
          <ScrollTrack $vertical>
            <Arrow dir="up" />
            <ScrollThumb $grow={779}><ThumbMark $wide /></ScrollThumb>
            <ScrollRest $grow={26} />
            <Arrow dir="down" />
          </ScrollTrack>

          <CursorCell>
            <CursorRow>
              <IconButton aria-label="Cursor options"><svg width="10" height="10"><path d="M1 9h7M3 7V3h3v3" stroke="#b4b4b4" strokeWidth="1.500" fill="none" /></svg></IconButton>
              <IconButton aria-label="Cursor view"><svg width="10" height="10"><path d="M0 1h10v6H0z" fill="#a8bdf0" /><path d="M2 9h6" stroke="#ddd" /></svg></IconButton>
              <IconButton aria-label="Add cursor"><svg width="10" height="10"><circle cx="5" cy="5" r="4.500" fill="#68b860" /><path d="M5 2v6M2 5h6" stroke="#fff" strokeWidth="1.600" /></svg></IconButton>
              <CursorText>Now</CursorText>
            </CursorRow>
            <CursorRow>
              <IconButton aria-label="Lock cursor"><svg width="10" height="10"><path d="M1 5h8v4H1z" fill="#f2c868" stroke="#c89030" /><path d="M3 5V2h4v2" stroke="#e0a850" fill="none" /></svg></IconButton>
              <IconButton aria-label="Edit cursor"><svg width="10" height="10"><path d="M1 9l6-6" stroke="#8fb0e8" strokeWidth="2" /><circle cx="7.500" cy="2.500" r="2" fill="#b4ccf4" /></svg></IconButton>
              <IconButton aria-label="Remove cursor"><svg width="10" height="10"><circle cx="5" cy="5" r="4.500" fill="#e4574c" /><path d="M2 5h6" stroke="#fff" strokeWidth="1.600" /></svg></IconButton>
              <CursorText $active>Cursor 1</CursorText>
            </CursorRow>
          </CursorCell>
          <CursorCell>
            <CursorText>14883926619 ps</CursorText>
            <CursorText $active>8223383777 ps</CursorText>
          </CursorCell>
          <Grey />

          <ScrollTrack $indent>
            <Arrow dir="left" /><ScrollThumb $grow={1} /><Arrow dir="right" />
          </ScrollTrack>
          <ScrollTrack>
            <Arrow dir="left" /><ScrollThumb $grow={1} /><Arrow dir="right" />
          </ScrollTrack>
          <ScrollTrack>
            <Arrow dir="left" />
            <ScrollThumb $grow={1195}><ThumbMark /></ScrollThumb>
            <ScrollRest $grow={208} />
            <Arrow dir="right" />
          </ScrollTrack>
          <Grey />
        </Panes>

        <StatusBar>
          <StatusCell $first>0 ps to 16135644614 ps</StatusCell>
          <StatusCell>{"Now: 20,845,348,349 ps  Delta: 2"}</StatusCell>
          <Resize />
        </StatusBar>
      </Window>

      <SlideFooter>
        <span>2016-08-20</span>
        <FooterMiddle>How to design your own chip?</FooterMiddle>
        <PageNumber>7</PageNumber>
      </SlideFooter>
    </Slide>
  );
}
